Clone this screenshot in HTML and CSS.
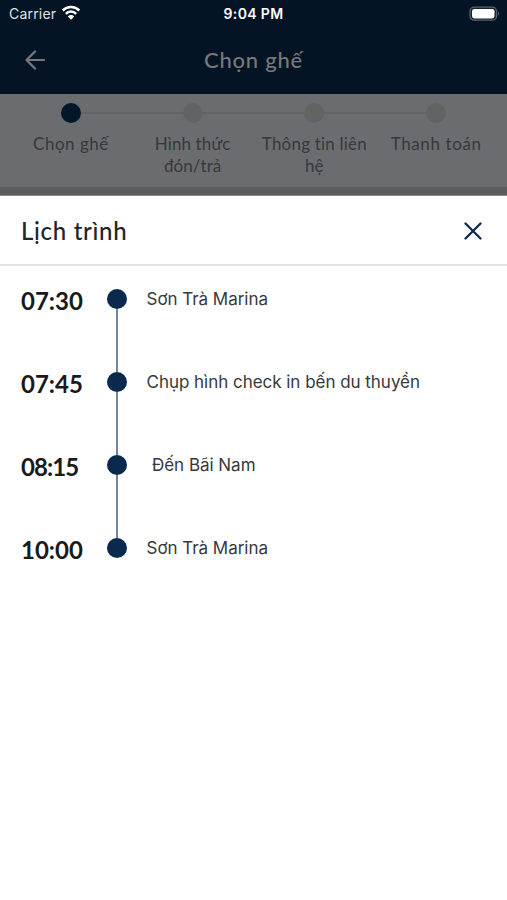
FILE: index.html
```html
<!DOCTYPE html>
<html lang="vi">
<head>
<meta charset="utf-8">
<title>Chọn ghế</title>
<link rel="stylesheet" href="styles.css">
</head>
<body>
<div class="status">
  <div class="carrier"><span class="carrier-name">Carrier</span>
    <svg class="wifi" width="20" height="16" viewBox="0 0 20 16"><g fill="none" stroke="#fff" stroke-width="2.5"><path d="M1.7 5.5a11.7 11.7 0 0 1 16.6 0"/><path d="M4.8 8.8a7.3 7.3 0 0 1 10.4 0"/></g><path d="M10 14.8l-3.2-3.4a4.5 4.5 0 0 1 6.4 0z" fill="#fff"/></svg>
  </div>
  <span class="clock">9:04 PM</span>
  <svg class="battery" width="32" height="16" viewBox="0 0 32 16"><rect x="1" y="1.2" width="26.5" height="13" rx="4" fill="#141f2e" stroke="#596270" stroke-width="1.3"/><rect x="3" y="3" width="22.5" height="9.4" rx="2.3" fill="#fff"/><path d="M29 5.5q2.2 2.2 0 4.4z" fill="#596270"/></svg>
</div>
<header class="nav">
  <svg class="back" width="20" height="20" viewBox="0 0 20 20"><path d="M19 10H1.5M10 1.5L1.5 10l8.5 8.5" fill="none" stroke="#77787b" stroke-width="2.2" stroke-linecap="round" stroke-linejoin="round"/></svg>
  <h1 class="nav-title">Chọn ghế</h1>
</header>
<ol class="steps">
  <li class="step active"><i class="step-dot"></i><span class="seat">Chọn ghế</span></li>
  <li class="step"><i class="step-dot"></i><span class="pickup">Hình thức<br>đón/trả</span></li>
  <li class="step"><i class="step-dot"></i><span class="contact">Thông tin liên<br>hệ</span></li>
  <li class="step"><i class="step-dot"></i><span class="payment">Thanh toán</span></li>
</ol>
<div class="gap"></div>
<main class="sheet">
  <div class="sheet-head">
    <h2 class="sheet-title">Lịch trình</h2>
    <svg class="close" width="18" height="18" viewBox="0 0 18 18"><path d="M1.5 1.5l15 15M16.5 1.5l-15 15" fill="none" stroke="#0b2b50" stroke-width="2.3" stroke-linecap="round"/></svg>
  </div>
  <ol class="schedule">
    <li class="stop"><time class="time">07:30</time><i class="dot"></i><span class="place">Sơn Trà Marina</span></li>
    <li class="stop"><time class="time">07:45</time><i class="dot"></i><span class="place">Chụp hình check in bến du thuyền</span></li>
    <li class="stop"><time class="time narrow">08:15</time><i class="dot"></i><span class="place beach">Đến Bãi Nam</span></li>
    <li class="stop"><time class="time">10:00</time><i class="dot"></i><span class="place">Sơn Trà Marina</span></li>
  </ol>
</main>
</body>
</html>
```
FILE: styles.css
```css
* { box-sizing: border-box; }
body { margin: 0; height: 900px; overflow: hidden; background: #fff; font-family: Lato, "Noto Sans", sans-serif; font-variant-ligatures: none; display: flex; flex-direction: column; }
h1, h2, ol { margin: 0; padding: 0; list-style: none; }
svg { display: block; flex: none; }
.status { height: 28px; background: #051424; color: #fff; display: grid; grid-template-columns: 1fr auto 1fr; align-items: center; padding: 0 6px 2px 9px; font-family: Inter, sans-serif; font-size: 14px; flex: none; }
.carrier { display: flex; align-items: center; gap: 5px; color: #dfe3e8; }
.carrier-name { letter-spacing: .2px; }
.wifi { margin-top: -1px; }
.clock { font-weight: 600; letter-spacing: .35px; margin-right: 3px; }
.battery { justify-self: end; margin-top: 1px; }
.nav { height: 66px; background: #051424; display: grid; grid-template-columns: 1fr auto 1fr; align-items: center; padding: 0 25px 2px; flex: none; }
.nav-title { color: #77787b; font-size: 22px; font-weight: 500; line-height: 28px; letter-spacing: .75px; }
.steps { height: 93px; background: #6b6c70; display: grid; grid-template-columns: repeat(4, 1fr); padding: 9px 10px 0; flex: none; }
.step { position: relative; text-align: center; color: #37383b; font-size: 17px; line-height: 22px; white-space: nowrap; }
.step-dot { position: relative; z-index: 1; display: block; width: 20px; height: 20px; border-radius: 50%; background: #626464; margin: 0 auto 10px; }
.active .step-dot { background: #03172b; }
.step:not(:last-child)::after { content: ""; position: absolute; left: 50%; top: 9px; width: 100%; height: 2px; background: #636467; }
.seat { letter-spacing: .5px; }
.pickup { letter-spacing: .1px; }
.contact { letter-spacing: .2px; }
.payment { letter-spacing: .6px; }
.gap { height: 9px; background: #5b5c5f; border-bottom: 1px solid #8d8e90; flex: none; }
.sheet { flex: 1; }
.sheet-head { height: 70px; border-bottom: 2px solid #e5e5e6; display: flex; align-items: center; justify-content: space-between; padding: 2px 25px 0 21px; }
.sheet-title { font-size: 24px; font-weight: 500; color: #222427; line-height: 30px; letter-spacing: .7px; }
.schedule { padding-top: 23px; }
.stop { position: relative; height: 83px; display: grid; grid-template-columns: 86px 20px 1fr; align-items: start; padding-left: 21px; }
.stop:not(:last-child)::after { content: ""; position: absolute; left: 116px; top: 20px; width: 2px; height: 63px; background: #71879f; }
.time { font-size: 24px; font-weight: 700; line-height: 24px; color: #191a1c; }
.narrow { letter-spacing: -.9px; }
.dot { width: 20px; height: 20px; border-radius: 50%; background: #0a294c; }
.place { font-family: Inter, sans-serif; font-size: 17px; line-height: 20px; color: #37383b; padding-left: 19.5px; letter-spacing: -.03px; }
.beach { padding-left: 25px; }
```
